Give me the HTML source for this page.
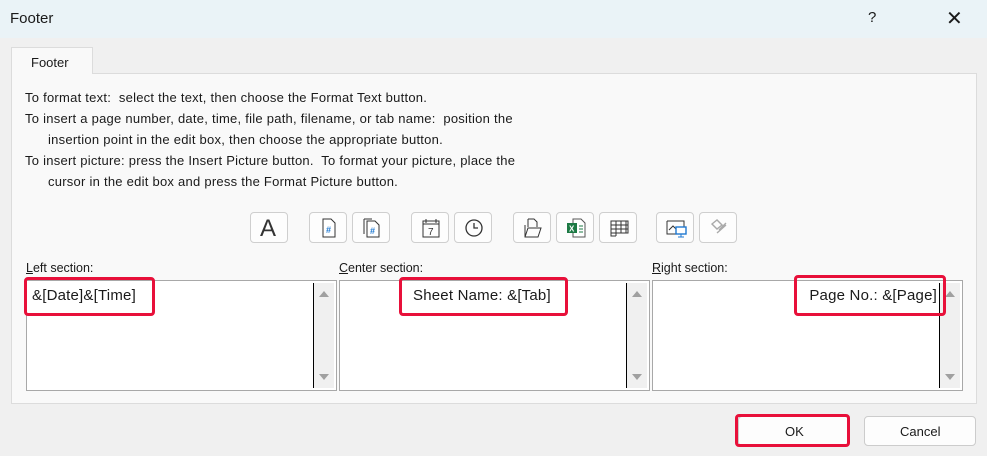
<!DOCTYPE html>
<html><head><style>
*{margin:0;padding:0;box-sizing:border-box}
body{width:987px;height:456px;overflow:hidden;background:#f0f0f0;font-family:"Liberation Sans",sans-serif;font-size:12.5px;color:#1a1a1a;position:relative}
.a{position:absolute}
.t{white-space:nowrap}
.ins{font-size:13px;letter-spacing:0.25px}
.ib{position:absolute;top:212px;width:38px;height:31px;background:#fdfdfd;border:1px solid #cfcfcf;border-radius:4px}
.ib svg{position:absolute;left:9px;top:5px}
.box{position:absolute;top:280px;height:111px;width:311px;background:#fff;border:1px solid #a8a8a8}
.sb{position:absolute;top:2px;right:2px;width:21px;bottom:2px;background:#f0f0f0;border-left:1px solid #000}
.sb:before{content:"";position:absolute;left:5px;top:8px;border:5px solid transparent;border-bottom:6px solid #a0a0a0;border-top:0}
.sb:after{content:"";position:absolute;left:5px;bottom:8px;border:5px solid transparent;border-top:6px solid #a0a0a0;border-bottom:0}
.red{position:absolute;border:3px solid #e8103a;border-radius:4px}
.lbl{position:absolute;top:261px;font-size:12.5px}
.btxt{font-size:15px;position:absolute;top:6px;letter-spacing:0.2px}
</style></head><body>
<div class="a" style="left:0;top:0;width:987px;height:38px;background:#eaf3f7"></div>
<div class="a t" style="left:10px;top:10px;font-size:15px">Footer</div>
<div class="a t" style="left:868px;top:9px;font-size:15px">?</div>
<div class="a t" style="left:946px;top:6px;font-size:20px;font-weight:300">✕</div>
<div class="a" style="left:11px;top:73px;width:966px;height:331px;background:#f9f9f9;border:1px solid #dcdcdc"></div>
<div class="a" style="left:11px;top:47px;width:82px;height:27px;background:#f9f9f9;border:1px solid #dcdcdc;border-bottom:none"></div>
<div class="a t" style="left:31px;top:55px;font-size:13px">Footer</div>
<div class="a t ins" style="left:25px;top:90px">To format text:&nbsp; select the text, then choose the Format Text button.</div>
<div class="a t ins" style="left:25px;top:111px">To insert a page number, date, time, file path, filename, or tab name:&nbsp; position the</div>
<div class="a t ins" style="left:48px;top:132px">insertion point in the edit box, then choose the appropriate button.</div>
<div class="a t ins" style="left:25px;top:153px">To insert picture: press the Insert Picture button.&nbsp; To format your picture, place the</div>
<div class="a t ins" style="left:48px;top:174px">cursor in the edit box and press the Format Picture button.</div>

<div class="ib" style="left:250px"><div class="t" style="position:absolute;left:9px;top:2px;font-size:24px;color:#333">A</div></div>
<div class="ib" style="left:309px"><svg width="20" height="20"><path d="M4 1h8l4 4v14H4z" fill="#fff" stroke="#333"/><text x="7" y="15" font-size="9" fill="#1e78d0" font-weight="bold">#</text></svg></div>
<div class="ib" style="left:352px"><svg width="20" height="20"><path d="M2 1h8M2 1v15M5 3h8l4 4v12H5z" fill="#fff" stroke="#333"/><text x="8" y="16" font-size="9" fill="#1e78d0" font-weight="bold">#</text></svg></div>
<div class="ib" style="left:411px"><svg width="20" height="20"><rect x="2" y="3" width="16" height="16" fill="none" stroke="#333"/><path d="M2 6h16M5 1v4M15 1v4" stroke="#333"/><text x="7" y="17" font-size="10" fill="#333">7</text></svg></div>
<div class="ib" style="left:454px"><svg width="20" height="20"><circle cx="10" cy="10" r="8" fill="none" stroke="#333" stroke-width="1.3"/><path d="M10 5v5h4" fill="none" stroke="#333" stroke-width="1.3"/></svg></div>
<div class="ib" style="left:513px"><svg width="20" height="20"><path d="M5 1h6l3 3v5M5 1v8M2 7v12h13l3-9H5l-3 9" fill="none" stroke="#333"/></svg></div>
<div class="ib" style="left:556px"><svg width="20" height="20"><path d="M7 1h8l4 4v14H7z" fill="#fff" stroke="#555"/><path d="M13 8h4M13 11h4M13 14h4" stroke="#1d7a45"/><rect x="1" y="5" width="10" height="10" fill="#1d7a45"/><text x="3" y="13.5" font-size="8" fill="#fff" font-weight="bold">X</text></svg></div>
<div class="ib" style="left:599px"><svg width="20" height="20"><path d="M2 3h17v12H2zM2 7h17M2 11h17M7 3v15M12 3v12M17 3v12M2 15v3h5" fill="none" stroke="#333"/></svg></div>
<div class="ib" style="left:656px"><svg width="22" height="20"><path d="M1 3h17v7M1 3v13h9" fill="none" stroke="#333"/><path d="M3 12l4-4 3 3" fill="none" stroke="#333"/><rect x="10" y="9" width="10" height="7" fill="#fff" stroke="#1e78d0" stroke-width="1.4"/><path d="M15 16v3M12 19h6" stroke="#1e78d0"/></svg></div>
<div class="ib" style="left:699px"><svg width="20" height="20"><path d="M3 6l5-4 5 5-5 4zM10 12l7-7M8 15l9-8" fill="none" stroke="#aaa" stroke-width="1.4"/></svg></div>

<div class="lbl t" style="left:26px"><u>L</u>eft section:</div>
<div class="lbl t" style="left:339px"><u>C</u>enter section:</div>
<div class="lbl t" style="left:652px"><u>R</u>ight section:</div>

<div class="box" style="left:26px"><div class="btxt t" style="left:5px">&amp;[Date]&amp;[Time]</div><div class="sb"></div></div>
<div class="box" style="left:339px"><div class="btxt t" style="left:73px">Sheet Name: &amp;[Tab]</div><div class="sb"></div></div>
<div class="box" style="left:652px"><div class="btxt t" style="right:25px">Page No.: &amp;[Page]</div><div class="sb"></div></div>

<div class="red" style="left:24px;top:277px;width:131px;height:39px"></div>
<div class="red" style="left:399px;top:277px;width:169px;height:39px"></div>
<div class="red" style="left:794px;top:275px;width:152px;height:41px"></div>

<div class="a" style="left:738px;top:416px;width:111px;height:30px;background:#fdfdfd;border:1px solid #ccc;border-radius:4px"></div>
<div class="red" style="left:735px;top:414px;width:115px;height:33px"></div>
<div class="a t" style="left:785px;top:424px;font-size:13px">OK</div>
<div class="a" style="left:864px;top:416px;width:112px;height:30px;background:#fdfdfd;border:1px solid #ccc;border-radius:4px"></div>
<div class="a t" style="left:900px;top:424px;font-size:13px">Cancel</div>
</body></html>
